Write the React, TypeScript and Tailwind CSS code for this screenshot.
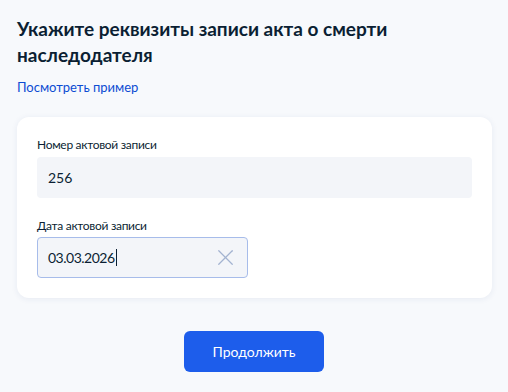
import { X } from "lucide-react";

export default function App() {
  return (
    <div
      className="min-h-screen w-full bg-[#f7f9fc] px-[17px] pt-[16px]"
      style={{ fontFamily: "Lato, 'Noto Sans', sans-serif" }}
    >
      <h1 className="text-[19px] font-bold leading-[26px] text-[#0b1f33]">
        Укажите реквизиты записи акта о смерти
        <br />
        наследодателя
      </h1>
      <a href="#" className="mt-[10px] block text-[13px] leading-[18px] text-[#0d4cd3]">
        Посмотреть пример
      </a>

      <div className="mt-[21px] w-[475px] rounded-xl bg-white px-5 pb-5 pt-[20px] shadow-[0_1px_6px_rgba(40,70,130,0.08)]">
        <label className="block text-[12px] leading-[16px] tracking-[-0.3px] text-[#0b1f33]">
          Номер актовой записи
        </label>
        <div className="mt-[4px] flex h-[41px] items-center rounded-[4px] bg-[#f3f5f9] px-[11px] text-[14px] text-[#0b1f33]">
          256
        </div>

        <label className="mt-[20px] block text-[12px] leading-[16px] tracking-[-0.3px] text-[#0b1f33]">
          Дата актовой записи
        </label>
        <div className="mt-[3px] flex h-[41px] w-[211px] items-center rounded-[4px] border border-[#a7bcea] bg-[#f3f5f9] pl-[10px] pr-[8px] text-[14px] text-[#0b1f33]">
          <span className="tracking-[-0.5px]">03.03.2026</span>
          <span className="ml-[1px] h-[17px] w-[1.5px] bg-[#0b1f33]" />
          <X className="ml-auto h-[27px] w-[27px] text-[#a3b3d1]" strokeWidth={1.1} />
        </div>
      </div>

      <div className="mt-[33px] flex justify-center">
        <button className="h-[41px] w-[140px] rounded-[6px] bg-[#1d5deb] text-[14px] text-white">
          Продолжить
        </button>
      </div>
    </div>
  );
}
